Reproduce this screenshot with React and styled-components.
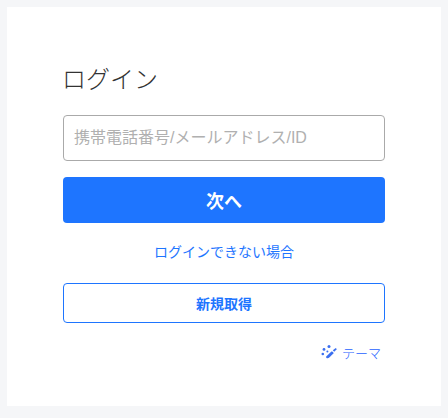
import React from "react";
import styled, { createGlobalStyle } from "styled-components";

const Global = createGlobalStyle`
  html, body { margin: 0; padding: 0; background: #f5f6f8; }
  body { font-family: "Liberation Sans", "Noto Sans CJK JP", sans-serif; }
  * { box-sizing: border-box; }
`;

const Page = styled.div`
  width: 448px;
  height: 418px;
  padding: 7px 7px 12px;
`;

const Card = styled.main`
  height: 399px;
  background: #fff;
  padding: 55px 56px 0;
  display: flex;
  flex-direction: column;
`;

const Title = styled.h1`
  margin: 0 0 17px -1px;
  height: 36px;
  font-size: 24px;
  line-height: 36px;
  font-weight: 300;
  color: #333;
`;

const Input = styled.input`
  display: block;
  width: 322px;
  height: 46px;
  padding: 0 10px;
  border: 1px solid #aaa;
  border-radius: 4px;
  font: inherit;
  font-size: 16px;
  color: #333;
  outline: none;
  &::placeholder { color: #b0b0b0; opacity: 1; }
`;

const Primary = styled.button`
  display: block;
  width: 322px;
  height: 46px;
  margin-top: 16px;
  border: 0;
  border-radius: 4px;
  background: #1e75ff;
  color: #fff;
  font: inherit;
  font-size: 18px;
  font-weight: 700;
`;

const HelpLink = styled.a`
  display: block;
  margin-top: 20px;
  height: 18px;
  line-height: 18px;
  text-align: center;
  font-size: 14px;
  color: #1e75ff;
`;

const Outline = styled.button`
  display: block;
  width: 322px;
  height: 40px;
  margin-top: 22px;
  border: 1px solid #1e75ff;
  border-radius: 4px;
  background: #fff;
  color: #1e75ff;
  font: inherit;
  font-size: 14px;
  font-weight: 700;
`;

const ThemeRow = styled.div`
  display: flex;
  justify-content: flex-end;
  align-items: center;
  gap: 4px;
  margin-top: 20px;
  padding-right: 4px;
  height: 18px;
  font-size: 13px;
  color: #1e62ff;
`;

const ThemeLabel = styled.span`
  font-weight: 300;
`;

const Wand = () => (
  <svg width="17" height="14" viewBox="0 0 17 14" fill="#3b6ff0">
    <path d="M5.2 11.4 L10.4 6.6 C11.4 6 13 7.4 12.4 8.6 L8 12.8 C6.8 13.8 4.4 13 5.2 11.4Z" />
    <path d="M11.8 5.2 L14.8 3 L15.8 4.2 L13.2 6.8Z" />
    <circle cx="8" cy="1.6" r="1.5" />
    <circle cx="3" cy="4.4" r="1.4" />
    <circle cx="1.8" cy="9" r="1.3" />
    <circle cx="6.4" cy="6.6" r="1" />
  </svg>
);

export default function App() {
  return (
    <Page>
      <Global />
      <Card>
        <Title>ログイン</Title>
        <Input placeholder="携帯電話番号/メールアドレス/ID" />
        <Primary>次へ</Primary>
        <HelpLink>ログインできない場合</HelpLink>
        <Outline>新規取得</Outline>
        <ThemeRow>
          <Wand />
          <ThemeLabel>テーマ</ThemeLabel>
        </ThemeRow>
      </Card>
    </Page>
  );
}
